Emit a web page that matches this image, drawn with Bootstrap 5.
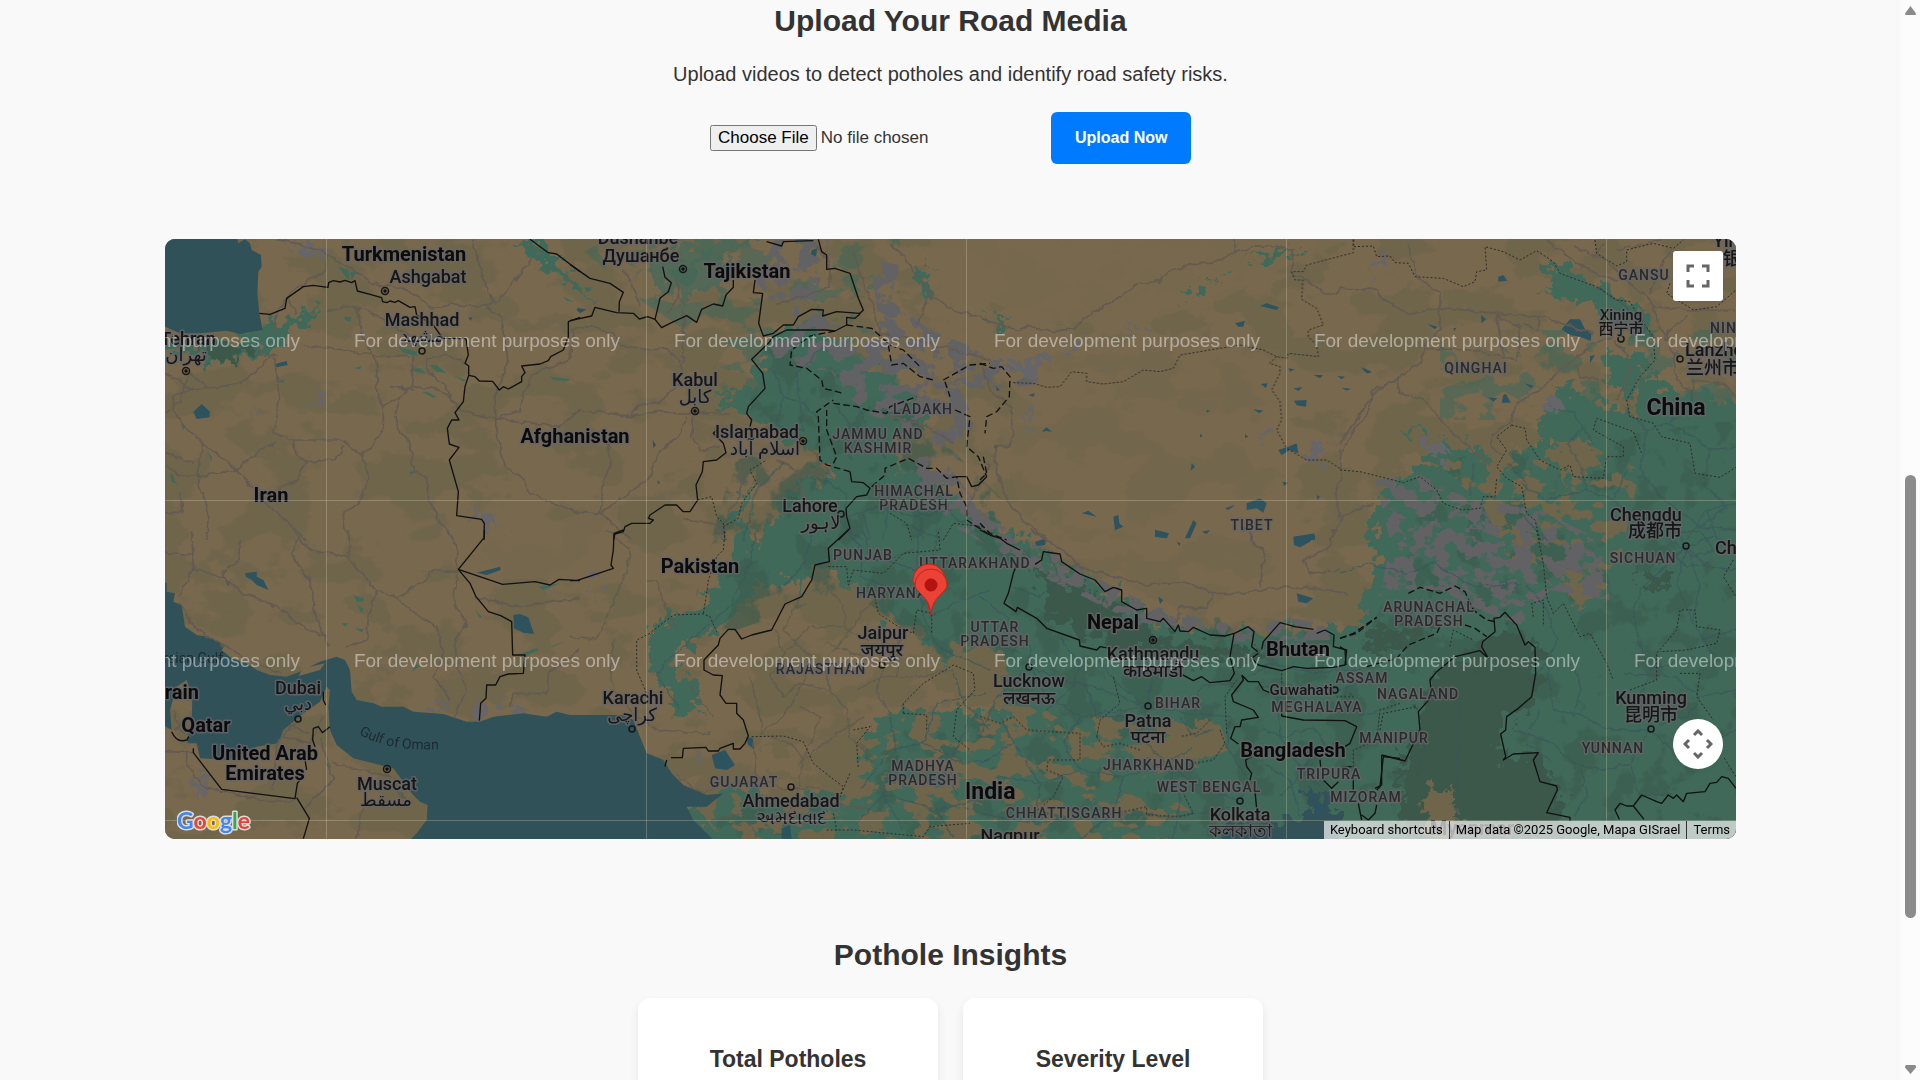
<!DOCTYPE html>
<html lang="en">
<head>
<meta charset="utf-8">
<meta name="viewport" content="width=device-width, initial-scale=1">
<title>Pothole Detection</title>
<link href="https://cdn.jsdelivr.net/npm/bootstrap@5.3.0/dist/css/bootstrap.min.css" rel="stylesheet">
<style>
body{font-family:"Liberation Sans",Arial,sans-serif;color:#333;background:#f9f9f9}
.viewport{height:100vh}
.section-title{font-size:30px;line-height:42px;font-weight:700}
.lead-line{font-size:20px;line-height:28px;margin-top:18px}
.upload-form{margin-top:24px;gap:10px}
.file-pick{width:331px;font-size:17px;line-height:20px}
.btn-upload{background:#007bff;color:#fff;font-weight:700;font-size:16px;line-height:20px;padding:16px 24px;border:0;border-radius:6px;width:140px;white-space:nowrap}
.btn-upload:hover{background:#0069d9;color:#fff}
.map-wrap{margin:75px 165px 0;height:600px;border-radius:10px;background:#78684e}
.map-btn{width:50px;height:50px;background:#fff;right:13px}
.map-full{top:12px;border-radius:3px}
.map-cam{bottom:70px}
.attribution{height:18px;background:rgba(245,245,245,.7);font-family:Roboto,sans-serif;font-size:13px;line-height:18px;right:0;bottom:0}
.attribution > *{color:#000;text-decoration:none;padding:0 6px;border:0;background:none;line-height:18px}
.attribution > * + *{border-left:1px solid #333}
.logo-link{left:12px;bottom:1px;line-height:0}
.insights{margin-top:95px}
.insight-row{margin-top:22px;gap:25px}
.insight-card{width:300px;border:0;border-radius:12px;padding:45px 20px;box-shadow:0 4px 10px rgba(0,0,0,.08)}
.insight-card h3{font-size:23px;line-height:32px;font-weight:700}
.scroll-track{width:19px;background:#fcfcfc}
.scroll-thumb{width:11px;border-radius:6px;background:#8b8b8b;top:44%;height:41%;left:4px}
/* map drawing */
.water{fill:#315159}.lake{fill:#2d535f}.green{fill:#41695a}.dark{fill:#3a594c}.snow{fill:#666569}.land{fill:#78684e}.olive{fill:#6e654b}
.border-line{fill:none;stroke:#111;stroke-width:4;stroke-linejoin:round}
.dispute{fill:none;stroke:#111;stroke-width:4;stroke-dasharray:20 10}
.province{fill:none;stroke:#2b2b28;stroke-width:3;stroke-dasharray:6 6}
.road{fill:none;stroke:#625a51;stroke-width:5;stroke-linejoin:round}
.road-g{fill:none;stroke:#3b555a;stroke-width:4;stroke-opacity:.7}
.road-s{fill:none;stroke:#5d594f;stroke-width:4;stroke-opacity:.8}
.grid-line{fill:none;stroke:#d8d4b8;stroke-opacity:.3;stroke-width:1}
.labels{font-family:Roboto,"Noto Sans","Noto Sans CJK SC","DejaVu Sans",sans-serif;text-anchor:middle;paint-order:stroke;stroke:#666569;stroke-opacity:.8;stroke-width:3px;stroke-linejoin:round}
.country{font-size:20px;font-weight:700;fill:#0c0c0c}
.big{font-size:23px;font-weight:700;fill:#0c0c0c}
.city{font-size:18px;font-weight:500;fill:#161616}
.town{font-size:15px;font-weight:500;fill:#161616}
.state{font-size:14px;font-weight:500;fill:#2b2b2b;letter-spacing:1px}
.sea{font-size:14px;fill:#1c2b31;stroke:none}
.watermark{font-family:"Liberation Sans",Arial,sans-serif;font-size:19px;fill:#fff;fill-opacity:.45;text-anchor:middle}
.st{text-anchor:start}.en{text-anchor:end}
.dot{fill:none;stroke:#161616;stroke-width:1.5}
</style>
</head>
<body>
<div class="viewport d-flex overflow-hidden">
<main class="flex-grow-1 overflow-hidden">
  <section class="text-center">
    <h2 class="section-title m-0">Upload Your Road Media</h2>
    <p class="lead-line mb-0">Upload videos to detect potholes and identify road safety risks.</p>
    <form class="upload-form d-flex justify-content-center align-items-center">
      <input class="file-pick" type="file" id="media" accept="video/*" aria-label="Road video">
      <button class="btn btn-upload" type="submit">Upload Now</button>
    </form>
  </section>

  <section class="map-wrap position-relative overflow-hidden">
    <svg class="d-block w-100 h-100" viewBox="165 239 1571 600" preserveAspectRatio="xMidYMid slice">
      <defs>
        <filter id="rough" x="-5%" y="-5%" width="110%" height="110%"><feTurbulence type="fractalNoise" baseFrequency=".08" numOctaves="4" seed="4"/><feDisplacementMap in="SourceGraphic" scale="38" xChannelSelector="R" yChannelSelector="G"/></filter>
        <filter id="wiggle" x="-5%" y="-5%" width="110%" height="110%"><feTurbulence type="fractalNoise" baseFrequency=".12" numOctaves="2" seed="9"/><feDisplacementMap in="SourceGraphic" scale="6" xChannelSelector="R" yChannelSelector="G"/></filter>
        <filter id="oliveN" x="0" y="0" width="100%" height="100%" color-interpolation-filters="sRGB"><feTurbulence type="fractalNoise" baseFrequency=".016 .024" numOctaves="5" seed="12"/><feColorMatrix values="0 0 0 0 .43 0 0 0 0 .395 0 0 0 0 .295 14 0 0 0 -7.1"/><feComposite in2="SourceGraphic" operator="in"/></filter>
        <filter id="brownN" x="0" y="0" width="100%" height="100%" color-interpolation-filters="sRGB"><feTurbulence type="fractalNoise" baseFrequency=".035 .05" numOctaves="4" seed="31"/><feColorMatrix values="0 0 0 0 .43 0 0 0 0 .395 0 0 0 0 .295 24 0 0 0 -12.4"/><feComposite in2="SourceGraphic" operator="in"/></filter>
        <filter id="greenN" x="0" y="0" width="100%" height="100%" color-interpolation-filters="sRGB"><feTurbulence type="fractalNoise" baseFrequency=".03 .04" numOctaves="4" seed="8"/><feColorMatrix values="0 0 0 0 .255 0 0 0 0 .41 0 0 0 0 .35 24 0 0 0 -13.6"/><feComposite in2="SourceGraphic" operator="in"/></filter>
        <filter id="darkN" x="0" y="0" width="100%" height="100%" color-interpolation-filters="sRGB"><feTurbulence type="fractalNoise" baseFrequency=".03" numOctaves="5" seed="22"/><feColorMatrix values="0 0 0 0 .23 0 0 0 0 .355 0 0 0 0 .3 12 0 0 0 -6.6"/><feComposite in2="SourceGraphic" operator="in"/></filter>
        <filter id="snowN" x="0" y="0" width="100%" height="100%" color-interpolation-filters="sRGB"><feTurbulence type="fractalNoise" baseFrequency=".06 .07" numOctaves="4" seed="5"/><feColorMatrix values="0 0 0 0 .385 0 0 0 0 .385 0 0 0 0 .395 20 0 0 0 -9.6"/><feComposite in2="SourceGraphic" operator="in"/></filter>
        <path id="omanCurve" d="M359,734 Q388,752 440,749"/>
        <g id="cap"><circle r="3.5" class="dot"/><circle r="1.8" fill="#111"/></g>
        <circle id="spot" r="3" class="dot"/>
      </defs>
      <rect class="land" x="165" y="239" width="1571" height="600"/>
      <rect class="land" x="165" y="239" width="1571" height="600" filter="url(#oliveN)"/>
      <path class="land" d="M930,239H1350L1290,265 1220,300 1130,325 1040,320 985,300 940,270Z" opacity=".85"/>
      <path class="land" d="M490,530 560,520 620,500 615,530 575,578 500,580 460,570Z" opacity=".7"/>
      <path class="land" d="M1040,340 1280,350 1280,620 1180,610 1090,570 1020,510 1000,430Z" opacity=".45"/>

      <!-- vegetation -->
      <g filter="url(#rough)">
        <path class="green" d="M765,350 783,325 830,335 900,380 930,420 900,440 890,470 915,462 955,500 1040,548 1107,590 1147,610 1173,627 1233,630 1263,633 1280,623 1330,630 1367,627 1360,597 1373,573 1377,557 1370,530 1377,497 1417,470 1433,453 1407,427 1440,440 1507,457 1547,437 1535,425 1557,390 1593,397 1630,417 1650,377 1673,390 1750,407 1750,860 700,860 690,815 740,785 780,800 860,790 870,730 900,710 1003,712 1010,680 963,670 940,657 927,640 917,627 890,623 880,593 847,587 833,567 817,567 803,597 797,577 757,587 737,610 713,633 680,650 670,670 697,680 703,710 677,717 670,697 650,663 650,628 700,603 718,588 728,555 735,505 755,485 745,520 755,550 775,520 790,487 837,473 817,465 803,443 770,427 750,417 717,400 750,385Z"/>
        <path class="green" d="M650,262 700,239 760,239 720,262 735,280 700,290 685,305 672,290 660,300Z" opacity=".7"/>
        <path class="green" d="M165,340 230,345 265,325 300,315 320,308 300,330 255,355 240,365 210,360 165,345Z"/>
        <path class="green" d="M518,239 540,243 560,270 585,285 595,300 575,290 545,268Z"/>
        <path class="green" d="M925,262 932,290 925,300 918,280ZM985,310 995,322 1012,320 1000,330 988,322ZM1180,295 1200,283 1205,292 1190,300ZM1215,280 1235,266 1225,278ZM1240,262 1275,250 1300,247 1285,258ZM1545,260 1600,285 1640,310 1655,330 1640,345 1610,320 1560,290Z"/>
        <path class="green" d="M1540,290 1580,285 1600,310 1570,300ZM1600,350 1645,355 1650,375 1625,400 1610,380ZM1555,385 1590,390 1580,402Z"/>
      </g>
      <path class="green" d="M765,350 830,335 900,400 1107,600 1367,640 1440,460 1736,420V839H720L700,815 860,790 870,730 1003,712 960,670 850,590 680,650Z" filter="url(#darkN)" opacity=".6"/>
      <path class="dark" filter="url(#rough)" d="M1483,640 1520,630 1540,650 1537,697 1507,717 1500,760 1537,755 1557,787 1570,839H1400V770L1430,680ZM1035,570 1090,590 1170,640 1260,650 1250,665 1120,650 1050,620ZM1370,630 1440,620 1400,650 1360,650ZM1640,570 1670,575 1660,590 1640,585Z"/>
      <path class="dark" filter="url(#rough)" d="M195,343 255,345 240,365 215,358Z"/>
      <path class="land" d="M720,735 870,720 1000,705 1160,715 1220,725 1230,750 1140,780 1190,810 1180,839H720L700,810 780,760Z" filter="url(#brownN)"/>
      <path class="land" d="M1560,430 1640,470 1620,560 1600,600 1540,560 1500,540 1480,500 1400,440Z" filter="url(#brownN)"/>
      <path class="olive" filter="url(#rough)" d="M1545,445 1590,450 1590,475 1560,480ZM1515,520 1530,530 1535,570 1515,565ZM1565,575 1590,580 1585,605 1570,600ZM1420,800 1450,785 1460,820 1455,839H1430ZM963,645 1000,650 1010,690 990,705 950,700 920,670ZM1150,735 1210,725 1220,745 1180,765 1130,750Z"/>
      <path class="green" d="M570,239H900L900,440 740,430 700,340 640,300ZM1440,330H1736V420H1440Z" filter="url(#greenN)" opacity=".55"/>

      <!-- snow and rock -->
      <path class="snow" filter="url(#snowN)" d="M755,280 775,240H830L815,300 830,325 880,330 870,260 900,265 890,300 930,330 1000,358 1040,385 960,390 975,420 960,460 930,440 860,410 830,370 780,370 770,345 800,320 770,300Z"/>
      <path class="snow" filter="url(#snowN)" d="M890,460 940,455 990,520 1040,545 1110,585 1150,605 1240,628 1290,618 1330,625 1330,640 1240,642 1130,620 1050,580 960,530Z"/>
      <path class="snow" filter="url(#snowN)" d="M1375,480 1420,475 1470,500 1540,510 1600,540 1610,600 1550,590 1520,625 1480,610 1440,590 1380,590 1340,650 1380,600 1390,540Z"/>
      <g class="snow" filter="url(#rough)"><path d="M285,246 305,240 330,250 325,255ZM250,406 256,408 252,418ZM315,392 325,395 320,404ZM1000,362 1055,358 1030,380ZM1060,350 1082,345 1075,355ZM1128,330 1150,325 1145,333ZM1308,445 1325,448 1320,465 1310,460ZM1540,395 1560,400 1560,415 1545,410ZM1415,430 1440,440 1455,460 1430,455ZM425,706 450,703 440,712ZM465,712 480,700 490,715 475,720ZM490,700 510,697 495,708ZM510,708 530,712 515,716ZM695,758 708,757 700,764ZM585,580 600,570 595,590ZM1258,433 1265,435 1260,442ZM1025,410 1033,420 1024,422ZM1380,250 1370,275 1385,270ZM197,775 210,780 198,798ZM470,510 490,515 500,530 480,525Z"/></g>

      <!-- seas -->
      <g transform="translate(160 230) scale(.333333)">
        <path class="water" d="M0,20H230L235,40 255,28 270,40 275,60 303,75 305,110 295,125 292,190 298,250 308,300 240,312 200,302 120,310 60,310 15,290 0,292Z"/>
      </g>
      <g transform="translate(160 530) scale(.333333)">
        <path class="water" d="M0,150 20,160 20,185 45,190 40,215 65,225 75,290 110,315 145,320 195,345 185,360 215,385 260,400 290,420 330,435 380,440 420,425 480,395 530,380 555,390 570,420 575,485 590,510 640,520 665,530 730,530 760,545 850,552 920,575 960,575 1000,560 1090,550 1160,560 1190,545 1230,555H1390L1420,570 1440,620 1460,670 1510,690 1535,730 1570,765 1640,795 1690,790 1640,830 1580,830 1600,870 1670,940H740L770,910 800,870 803,825 780,815 755,790 700,715 640,700 580,685 530,645 510,600 505,530 510,480 500,470 480,515 430,550 370,600 355,640 290,650 260,665 210,690 120,685 110,640 85,640 80,630 95,580 97,500 80,450 50,470 30,540 35,600 0,580Z"/>
        <path class="land" d="M415,438 430,415 495,400 480,420Z"/>
        <path class="lake" d="M1060,255 1080,252 1105,262 1122,312 1090,308 1062,295ZM255,130 290,125 290,140 310,150 325,180 290,165 275,150 258,140ZM195,150 210,155 205,168ZM950,128 1020,110 1022,120 980,135Z"/>
      </g>
      <g transform="translate(570 530) scale(.333333)"><path class="lake" d="M425,675 465,660 495,705 470,720 435,715ZM528,620 548,625 553,658 535,645ZM635,895 660,885 665,926H635Z"/></g>
      <path class="water" filter="url(#rough)" d="M1207,850 1233,823 1273,820 1293,823 1313,810 1303,785 1330,803 1340,820 1347,850Z"/>

      <!-- lakes -->
      <g class="lake">
        <g transform="translate(160 230) scale(.333333)"><path d="M100,545 125,522 150,545 148,562 110,567ZM345,402 380,393 383,405 350,412ZM925,263 938,262 932,272ZM1255,230 1260,250 1250,240Z"/></g>
        <g transform="translate(570 230) scale(.333333)"><path d="M725,60 742,55 738,80 722,72ZM25,235 50,238 30,250ZM248,630 258,645 250,655ZM262,750 270,758 264,762Z"/></g>
        <g transform="translate(980 230) scale(.333333)"><path d="M840,228 860,220 897,232 890,240ZM765,280 795,272 790,290 775,290ZM145,495 165,490 160,500ZM185,605 200,592 215,605 200,603ZM842,462 862,460 858,474ZM940,475 968,472 955,483ZM942,512 980,510 978,530 950,526ZM1000,435 1030,435 1020,445ZM925,415 945,418 930,425ZM1072,438 1095,440 1085,448ZM1145,412 1175,425 1165,430ZM820,538 850,542 838,550ZM305,850 325,842 350,860ZM400,860 415,855 418,880 430,890 405,900ZM640,870 650,880 630,925 615,925ZM800,820 840,805 860,820 850,848 830,835 800,840ZM525,900 567,910 560,925 530,920ZM895,660 925,650 950,640 955,670 930,660 905,675ZM680,540 690,543 680,548ZM635,700 645,710 632,722ZM660,612 668,618 660,622ZM795,612 805,620 795,625ZM665,905 690,900 680,912ZM735,835 765,825 745,840ZM945,920 1005,915V930H945ZM1010,795 1020,800 1012,810ZM1085,473 1112,476 1100,482ZM908,755 925,758 912,768ZM48,470 60,480 50,482ZM42,645 55,650 45,656ZM780,890 800,893 790,905Z"/></g>
        <g transform="translate(1340 230) scale(.333333)"><path d="M665,298 690,268 720,268 735,298 755,305 752,333 720,320 690,315ZM475,140 490,135 502,152 475,155ZM423,255 438,268 425,280ZM262,282 292,290 285,298ZM445,502 472,505 460,515ZM490,495 498,492 512,518 485,518ZM62,412 95,428 80,430ZM750,378 765,375 750,400ZM340,295 350,293 342,303ZM555,460 580,468 572,474Z"/></g>
        <g transform="translate(980 530) scale(.333333)"><path d="M940,20 1005,10 990,35 960,52 942,45ZM525,0 565,10 560,25 525,20ZM165,35 200,25 195,45 170,48ZM535,200 550,210 540,222ZM950,190 1000,205 980,220 955,215ZM980,790 1010,820 1000,850 1040,840 990,780ZM590,35 602,40 598,48Z"/></g>
      </g>

      <!-- small green patches of the west -->
      <g class="green"><g transform="translate(160 230) scale(.333333)"><path d="M550,260 575,262 570,275 555,270ZM535,110 565,120 570,150 560,145ZM570,125 588,128 575,150ZM715,350 770,365 770,378 730,368ZM808,405 830,405 860,430 830,425ZM755,415 780,415 798,430 765,425ZM885,437 918,450 910,455ZM785,485 800,485 830,500 820,503ZM583,415 605,408 600,418ZM745,725 765,725 755,735ZM30,733 40,735 45,755 58,765 35,755ZM142,665 155,680 155,695ZM1170,440 1228,447 1225,453 1180,450ZM352,455 375,448 370,458ZM62,580 78,590 70,600ZM1210,200 1242,215 1220,212Z"/></g>
      <g transform="translate(160 530) scale(.333333)"><path d="M580,195 612,205 610,215 590,215ZM590,225 610,235 605,248ZM545,280 565,280 555,290ZM585,295 612,298 605,307ZM945,240 965,260 960,265ZM1085,370 1130,355 1135,360 1095,380ZM1135,170 1200,160 1150,180ZM495,690 510,712 500,708ZM755,425 770,402 780,408ZM1170,350 1220,332 1180,350ZM720,785 732,790 725,805Z"/></g></g>

      <!-- roads -->
      <g class="road" filter="url(#wiggle)">
        <g transform="translate(160 230) scale(.333333)"><path d="M350,28 430,45 500,70 640,160 740,180 820,235 870,225 950,228 1010,220 1120,80M935,28 965,130 1000,220M980,230 1025,260 1042,380 1030,440 1005,500 1008,600 1035,710 1095,750 1105,790 1260,850M505,75 495,125 430,160 390,190 350,250 345,310M500,245 560,230 620,240 700,290 760,320M430,345 550,360 640,375 750,380M590,240 610,320 650,400 652,480 670,540 670,600 640,640 605,680 630,740 605,800 590,825 550,850 555,900 570,930M340,370 290,420 240,460 150,475 90,480 40,500 40,540 75,590 130,640 230,720 330,830 440,930M340,380 355,450 355,560 340,610 400,630 550,630 610,680M230,720 300,660 350,635M400,630 405,670 440,695 520,690 555,650M440,695 410,750 350,780M105,740 230,720M130,640 110,740 145,850 140,930M15,430 100,480M15,550 60,510 90,430 150,475M760,380 755,470 720,500 705,560 720,610 745,630 760,720 800,745 805,800 830,860 880,930M760,470 820,475 870,500 890,530 940,555 1080,575 1200,590 1260,540M690,470 760,480M800,380 800,420 850,460 880,520M670,530 720,500M15,700 60,740 120,735M15,850 70,850 60,790M15,670 100,700M1010,565 1080,540 1090,490 1120,430 1180,410 1230,390 1240,300M380,200 410,250M350,375 290,375M800,385 860,375 920,400"/></g>
        <g transform="translate(570 230) scale(.333333)"><path d="M0,300 60,290 130,310 150,345 240,360 290,355 330,390 340,440M0,550 90,545 180,560 260,545 370,550 480,555M180,560 200,530 270,515 340,450M350,560 330,610 260,680 240,740 160,800 90,850 0,840M370,560 365,620 390,660 450,650M110,640 125,690 100,760 90,850 180,930M620,690 680,720 700,800 720,900M740,50 780,100 780,170 700,200 620,220M850,60 880,160 910,230 930,310 1040,330 1150,360 1260,390M960,40 1000,80 1080,190 1060,240 1040,280M1080,195 1150,240 1260,270M160,120 190,170 210,230M320,150 330,200 290,250M340,240 340,400M720,650 790,750M960,560 1050,580 1150,640M340,870 430,880 470,930M510,700 510,800 470,850M1260,700 1190,840"/></g>
        <g transform="translate(980 230) scale(.333333)"><path d="M0,265 110,300 140,288 220,305 290,295 310,265 420,200 480,160 540,155 560,130 640,100 700,100 760,70 830,48 900,50 940,65 935,130 980,150 1030,190 1070,195 1080,175 1190,178 1205,205 1260,240M765,28 765,68M0,400 30,480 95,530 100,600 90,650 45,650 50,720 75,800 130,870 200,930M1260,445 1180,480 1165,550 1120,600 1080,670 1085,730 1065,800 1080,860 1180,820M1090,860 1050,930M810,905 815,930"/></g>
        <g transform="translate(1340 230) scale(.333333)"><path d="M170,445 240,400 260,340 300,300 300,190 230,140 205,40M100,490 170,445M0,640 30,600 100,490M130,210 200,250 330,235 470,250 600,260 760,310M260,355 390,360 530,390 540,290 470,255 490,380M170,445 180,490 250,510 330,600 450,710M600,260 595,300 550,280M820,320 760,340 640,440 600,480 530,520 510,580 460,610 450,650 490,680M620,30 700,90 780,140 830,150M700,50 800,90 870,160 930,210 960,290 1000,370 1010,450 1100,530M930,190 950,130 990,60M800,30 760,80M940,230 1050,240 1188,240M1040,260 980,310 990,350M820,330 860,370 870,430 830,510M710,400 720,440 780,445M830,60 960,30M1060,450 1150,460 1188,500"/></g>
        <g transform="translate(160 530) scale(.333333)"><path d="M400,0 415,20 395,75 450,150 465,250 505,350M415,20 450,60 560,80 650,180 710,205 780,260 830,290 850,370M565,0 570,80M710,205 800,150 815,120 890,130M650,180 625,260 620,330 560,355M95,0 100,110 55,200M15,65 95,75M100,115 190,145 240,185 340,225 440,295 500,320M240,30 235,90 190,130 190,145M60,215 100,290 190,345 250,380 360,430M860,0 890,50 890,150 880,220 920,280 885,330 890,400M940,200 1080,230 1260,205M850,370 820,440 870,510M890,400 920,480 880,560M1060,490 1050,530M1060,490 1160,490 1165,430 1260,360M15,665 100,668M80,670 80,700 130,770 320,815 400,815M340,780 350,640 420,560M480,630 520,750 430,840M520,700 600,720 690,740M700,740 720,800 760,820M610,830 590,926M370,620 450,640 490,560M390,590 450,610M40,540 60,600 90,620M40,600 90,560"/></g>
        <g transform="translate(980 530) scale(.333333)"><path d="M150,0 250,60 300,110 400,140 500,165 610,155 700,190 780,190 920,170 1010,175 1100,190M700,190 680,235 600,230 590,280M840,170 855,70 810,30V0M1060,0 1050,50 970,90 990,130 1080,120"/></g>
      </g>
      <g class="road-s" filter="url(#wiggle)">
        <g transform="translate(570 530) scale(.333333)"><path d="M110,0 180,60 175,110 80,330 0,320M230,150 260,150 290,240 320,300M130,330 120,420 130,480 200,560 260,600 420,610M540,440 560,520 580,610M620,300 640,370 600,440 640,500 690,460 780,480 830,540M690,200 640,300 720,380 700,460M740,130 820,230 830,300 900,330M830,290 720,290 640,370M700,460 640,560 570,610M780,480 760,400 850,290 900,220M690,530 750,560 720,640 690,700M860,480 940,440 1050,440 1150,420M940,410 920,480 960,560M600,620 660,640 700,690 680,800 640,880M320,740 400,790 450,760M430,870 520,850 560,920M700,690 790,620 880,560M830,540 840,620 900,680M770,340 880,380 930,410M830,60 760,110M990,300 980,440M550,640 560,740 640,780 740,770 800,820 900,840M870,640 920,700M360,470 430,560"/></g>
      </g>
      <g class="road-g" filter="url(#wiggle)">
        <g transform="translate(570 530) scale(.333333)"><path d="M560,0 540,100 480,230 300,380 260,430 330,540M730,0 700,100 640,170M1050,0 1040,90 1060,260 1100,350 1260,420M880,0 900,80 1040,120M830,0 880,60 870,140 950,170M1100,0 1090,100M1080,260 1180,210 1260,180M1030,60 940,90 860,80M870,780 960,660 1060,640 1180,700 1260,690M960,560 980,680 940,790 1000,900M1060,640 1100,520 1250,490M1150,420 1180,520 1260,600M940,790 1100,840 1260,800M1100,840 1150,926M1200,560 1140,700 1160,800M860,880 940,790"/></g>
        <g transform="translate(570 230) scale(.333333)"><path d="M610,420 640,500 620,590 700,600M640,500 700,520 740,560M700,600 680,430 760,350M800,530 850,600 840,690M860,520 900,620 950,690M830,860 930,830 1030,860 1150,840M820,890 880,930M960,800 940,930M1040,800 1060,930M880,850 900,930M740,740 830,790 820,870M650,800 800,830M520,930 560,780 640,700M1000,880 1120,930M1100,790 1160,870 1250,900"/></g>
        <g transform="translate(980 530) scale(.333333)"><path d="M0,200 80,260 150,350 150,410 240,450 340,470 500,530 640,550 750,560M0,320 120,370M150,410 50,500 0,620M150,410 200,500 300,560 500,530M240,320 300,400 280,470 200,540M350,380 400,450 500,530M500,530 520,420 600,440M500,530 480,620 560,700 640,760 770,810M640,550 660,470 760,460M750,560 740,650 800,740 780,820M640,650 560,700 430,740 300,720 180,760 50,740M430,740 400,850 300,926M560,700 600,800 580,926M300,560 250,640 300,720M100,640 180,760 160,880M0,850 160,880 400,850 580,860 770,830M200,60 240,150 180,200 100,170M850,600 920,620 1000,590M890,480 900,620 950,700 1020,770M830,470 960,470 1080,480 1200,430M1000,590 1040,650 960,720M850,700 930,750 960,860M900,800 1000,700M790,450 870,400 1000,430 1200,410M1100,480 1090,560M1140,560 1240,530M320,470 350,560 480,560M60,560 100,640 0,700M700,600 640,620 600,560"/></g>
        <g transform="translate(1340 530) scale(.333333)"><path d="M0,130 80,100 200,130 280,100 400,170 540,160M560,160 620,240 650,330 620,400 640,540 740,560 800,600 930,600M930,600 1000,660 1100,650 1188,600M930,600 900,500 930,420 900,340 880,250 900,180 1040,50M1040,50 980,100 920,100M1040,50 1100,110 1188,120M1040,50 1000,0M1040,50 1120,20 1188,40M1040,50 1080,160 1060,280 1120,380 1188,400M1040,50 1010,160 1060,280M930,600 870,700 790,720 700,700 640,640 520,600M870,700 900,800 1000,790M700,380 720,480 700,560M850,430 1000,440 1080,500 1040,560 960,580M1080,500 1188,480M620,400 560,460M360,500 350,860M230,740 260,640 200,620M420,440 400,420M600,540 570,600M1080,330 1188,300M720,700 740,800 700,860M930,420 1060,380M980,20 1060,80 1120,60 1080,0 1000,10M990,60 1040,110 1110,100M560,640 640,700"/></g>
        <g transform="translate(1340 230) scale(.333333)"><path d="M770,170 860,230 940,320M860,540 920,600 980,580 1060,620 1110,660 1188,650M1060,450 1050,540 980,580M500,700 560,760 540,850 620,930M540,760 620,810 740,780 820,810 900,880M740,780 720,700 680,640 740,590M920,600 900,720 960,800M1110,660 1090,760 1160,830 1080,890M1040,930 1100,840 1188,820M1100,840 1130,930M390,800 400,700M650,540 700,550 760,640M960,800 1080,890 1188,900M820,810 860,720"/></g>
      </g>

      <!-- provincial boundaries -->
      <g class="province">
        <g transform="translate(980 230) scale(.333333)"><path d="M1120,30 1120,68 980,105 970,125 935,125 945,150 968,150 965,208 1010,235 1030,285 985,300 985,320 1010,345 1015,380 925,370 920,385 890,380 850,360 780,345 690,360 600,375 580,415 540,425 490,420 430,455 370,462 320,455 320,430 275,425 240,470 200,472 160,460 100,458M890,380 868,400 900,410 900,430 875,480 900,515 905,570 890,600 920,655 980,690 1040,690 1080,715"/></g>
        <g transform="translate(1340 230) scale(.333333)"><path d="M40,28 40,50 100,48 110,80 150,78 165,98 205,100 225,140 310,145 370,170 405,155 410,125 440,120 435,50 490,65 540,90 590,62 640,95 660,130 700,145 770,170 830,210 870,215 890,250 940,320 945,390 900,440 860,510 870,560 940,580 965,620 1050,640 1065,730 1140,742 1188,712M0,720 60,725 120,740 190,758 240,740 290,780 310,820 365,840 420,835 430,800 465,800 470,745M515,585 555,595 560,630 600,690 660,720 690,705 700,740 790,745 800,680 850,680 850,650 760,600 770,565 880,605 905,670M515,585 470,620 500,660 470,710 500,745 545,770 560,850 585,870 600,930M765,30 770,70 830,108 860,95 860,60 940,40 1000,55 1030,30M990,160 980,190 1060,240 1130,230 1188,180"/></g>
        <g transform="translate(980 530) scale(.333333)"><path d="M350,620 360,570 420,520 400,440M0,560 60,580 100,560 140,600 300,610 300,690 205,690 200,720 250,740 220,800 150,860M350,620 370,650 420,640 480,660M740,610 735,500 770,450M720,600 735,640 700,690 640,700M690,570 650,610 600,620M410,850 500,830 500,855 600,860 640,850 610,790M1110,490 1120,500 1070,500M905,430V470M1260,520 1200,540 1190,630 1120,660 1120,780"/></g>
        <g transform="translate(570 530) scale(.333333)"><path d="M400,250 410,190 415,150 440,80 460,60 465,0M245,305 310,255 400,252 420,260 440,305M240,310 200,330 200,420 230,490M545,620 640,618 700,635 730,700 780,740 820,770 810,800 840,730M850,600 900,590 860,640 865,715M1000,550 1000,520 1060,460 1150,405 1210,430 1215,480 1160,540 1150,620 1200,660M1000,550 1070,555 1070,600M775,110 830,110 835,165 850,120 940,130 1000,70 1110,60 1105,0M915,205 925,250 985,290 1030,310 1040,240 1085,250 1085,310M770,900 850,900 1060,920 1080,890 1200,880M790,850 800,900"/></g>
        <g transform="translate(570 230) scale(.333333)"><path d="M383,810 425,800 440,860 460,880 465,930M460,890 505,865 515,820 560,760 540,720 590,690M960,850 1010,880 1025,930M1120,930 1150,880 1240,890"/></g>
        <g transform="translate(1340 530) scale(.333333)"><path d="M590,0 610,100 620,200 640,250 670,220 720,320 750,310 800,400 820,450M580,260 575,220 610,210 610,290M870,480 950,450 950,370 1010,300 1020,240 1065,240 1070,290 1140,300 1130,340 1040,360 960,365M1020,430 1080,430 1070,500 1120,570M1180,90 1150,140 1188,200M330,350 340,300 400,330M120,600 130,550 230,530M1188,740 1150,680"/></g>
      </g>

      <!-- borders -->
      <g class="border-line">
        <g transform="translate(160 230) scale(.333333)"><path d="M298,250 330,253 375,235 380,205 430,170 460,166 504,172 506,158 520,152 540,156 555,151 575,158 585,152 592,183 630,193 665,203 668,215 680,218 690,213 705,217 715,212 750,232 765,230 770,255 820,285 848,325 918,326 925,375 915,400 926,408 926,436 945,440 958,453 998,454 1018,480 1030,470 1045,477 1085,455 1085,440 1095,428 1085,408 1140,402 1165,392 1172,380 1210,360 1225,320 1225,275 1260,262M926,436 915,470 910,515 885,548 897,570 875,570 862,595 868,642 897,652 868,690 895,785 890,857 965,868 973,880 972,930M1110,28 1165,68 1190,72 1260,125"/></g>
        <g transform="translate(570 230) scale(.333333)"><path d="M0,272 65,258 75,232 140,248 190,250 208,267 233,260 255,268 275,293 300,280 350,257 380,277 395,238 430,222 458,228 468,195 490,172 490,150M0,103 60,145 120,160 160,187 148,215 147,245M278,110 285,142 304,158 295,185 270,205 255,268M555,150 550,188 578,190 566,280 580,318 610,310 640,285 670,285 685,260 725,238 760,240 758,258 800,245 870,250 880,240 865,205 850,160 840,130 795,115 770,118 770,75 755,65 745,28M870,252 855,265 830,262 830,285 795,303 770,300 650,300 610,320 595,340 545,388 578,430 585,475 535,530 530,550 545,570 540,590M440,600 430,610 460,640 468,668 440,690 400,695 397,725 378,765 383,810 360,845 340,845 320,825 285,825 240,855 235,865 250,870 240,880 185,880 165,890 160,905 135,912 130,930M590,35 635,48 640,35 730,32M805,930 840,895 830,860 828,835 860,800 890,795 900,775 880,758 845,755 840,725M1160,740 1190,740 1205,770 1225,765 1250,740"/></g>
        <g transform="translate(570 530) scale(.333333)"><path d="M160,0 132,10 130,60 123,105 130,115 20,152 0,152M835,0 775,55 778,95 735,105 725,150 695,200 645,222 605,300 545,315 515,327 495,298 475,298 450,325 445,345 402,390 402,420 430,435 457,437 450,495 468,520 500,520 500,550 520,570 535,618 525,640 510,657 490,657 490,640 450,655 445,663 415,663 408,652 340,655 337,683 303,683M290,690 285,710"/></g>
        <g transform="translate(160 530) scale(.333333)"><path d="M973,0 973,22 895,118 1028,163 1125,155 1170,165 1197,148 1260,152M895,118 930,160 948,200 985,245 1022,257 1055,275 1058,375 1095,375 1090,430 1045,432 1020,440 1007,465 980,465 978,505 962,520 958,572M100,655 100,668 185,778 405,806 412,760 420,750M435,690 440,720M410,803 448,865 430,926M35,605 Q50,640 80,630L87,620M490,485 490,510 497,525M510,590 487,608 475,590 460,595 458,630 465,650"/></g>
        <g transform="translate(980 530) scale(.333333)"><path d="M112,100 100,130 85,190 72,220 108,245 112,232 170,265 200,295 298,330 300,348 350,360 360,350 390,355M600,430 640,452 665,440 690,458 750,452 763,430 750,380 762,310 735,318 690,315 640,292 625,305 600,303 595,285 585,305 550,265 540,275 500,265 500,235 470,240 425,215 425,180 400,172 375,185 345,150 300,132 245,95 240,72 190,65 185,90 165,103M120,60 80,40 60,25 30,15 0,0M763,310 805,290 822,305 815,350 833,365M845,358 850,335 900,278 945,290 1000,298M1010,310 1035,300 1062,315 1060,350 1100,360 1095,405 1060,412 980,415 940,410 905,422 835,405 815,385 835,370M785,435 805,455 835,455 850,480 875,490M905,550 905,558 970,570 1095,572 1130,590 1110,640 1095,650M785,435 790,450 755,495 760,515 820,540 835,562 785,570 780,590 765,590 752,625 775,642M815,680 797,690 800,710 815,730 810,750M825,785 830,835M1020,690 1022,710M1030,750 1055,775 1075,755M1085,712 1115,710M1120,740V780M1135,820 1145,870M1260,685 1210,680 1200,770 1190,780M1190,825 1185,850 1165,870 1145,855"/></g>
        <g transform="translate(1340 530) scale(.333333)"><path d="M125,675 195,693 240,600 235,545 275,500 270,450 290,425 345,380 420,362 445,385 425,350 428,335 465,305 462,265 480,262 495,247 530,285 555,345 565,335 585,352 587,430 575,500 535,535 500,560 497,600 482,612 497,680 490,690 520,672 595,668 580,690 600,755 650,768 652,780 620,848 690,862 690,875M125,675 125,765 105,775M912,868 880,828 860,828 840,820 825,840 838,868M880,828 905,795 950,815 965,820 985,795 1000,805 1010,795 1030,815 1040,790 1095,785 1110,760 1130,757 1145,740 1165,745 1188,775M0,350 15,360 18,405"/></g>
      </g>
      <g class="dispute">
        <g transform="translate(570 230) scale(.333333)"><path d="M830,285 905,295 960,345 1000,360 1050,410M840,725 770,705 750,690 745,560 740,545 790,510M795,303 720,318 665,360 660,405 710,415 755,450 760,475 820,490M790,520 860,530 890,540 950,550 960,530 1040,500M790,700 800,680 770,600 770,540M1155,540 1200,560 1190,650 1225,680 1250,740M905,770 945,735 945,715 1015,685 1070,715 1100,715 1130,745 1160,740 1170,790 1190,830 1190,870 1260,915M1120,450 1200,405 1260,400M955,345 965,405 1000,400 1050,440 1090,450M1125,455 1140,500"/></g>
        <g transform="translate(980 230) scale(.333333)"><path d="M0,400 40,415 65,410 90,440 88,500 50,545 20,560 15,610M10,680 20,730 0,750M0,880 30,910 80,930"/></g>
        <g transform="translate(980 530) scale(.333333)"><path d="M1080,325 1130,310 1190,262"/></g>
        <g transform="translate(1340 530) scale(.333333)"><path d="M0,325 40,310 110,262M205,190 240,172 300,190 345,168 375,185 400,240 440,270 465,275M80,410 170,385 205,345 290,310 300,290M375,285 405,295 440,320"/></g>
      </g>

      <!-- place markers -->
      <use href="#cap" x="385" y="291"/><use href="#cap" x="186" y="371"/><use href="#cap" x="683" y="269"/><use href="#cap" x="695" y="411"/><use href="#cap" x="803" y="441"/><use href="#cap" x="1153" y="640"/><use href="#cap" x="387" y="769"/>
      <use href="#spot" x="422" y="351"/><use href="#spot" x="841" y="514"/><use href="#spot" x="1621" y="339"/><use href="#spot" x="1680" y="359"/><use href="#spot" x="1686" y="546"/><use href="#spot" x="1651" y="729"/><use href="#spot" x="298" y="719"/><use href="#spot" x="632" y="729"/><use href="#spot" x="791" y="787"/><use href="#spot" x="882" y="665"/><use href="#spot" x="1029" y="667"/><use href="#spot" x="1148" y="706"/><use href="#spot" x="1335" y="690"/><use href="#spot" x="1240" y="801"/>

      <g class="labels">
        <g class="country">
          <text x="404" y="261">Turkmenistan</text><text x="747" y="278">Tajikistan</text><text x="271" y="502">Iran</text><text x="575" y="443">Afghanistan</text><text x="700" y="573">Pakistan</text><text x="206" y="732">Qatar</text><text class="en" x="199" y="699">Bahrain</text><text x="265" y="760">United Arab</text><text x="265" y="780">Emirates</text><text x="1113" y="629">Nepal</text><text x="1298" y="656">Bhutan</text><text x="1293" y="757">Bangladesh</text><text x="1472" y="835">Myanmar</text>
        </g>
        <g class="big"><text x="1676" y="415">China</text><text x="990" y="799">India</text></g>
        <g class="city">
          <text x="428" y="283">Ashgabat</text><text x="422" y="326">Mashhad</text><text x="422" y="342">مشهد</text><text x="188" y="345">Tehran</text><text x="186" y="361">تهران</text><text x="638" y="244">Dushanbe</text><text x="641" y="262">Душанбе</text><text x="695" y="386">Kabul</text><text x="695" y="403">كابل</text><text x="757" y="438">Islamabad</text><text x="765" y="455">اسلام آباد</text><text x="810" y="512">Lahore</text><text x="821" y="529">لاہور</text><text x="883" y="639">Jaipur</text><text x="882" y="656">जयपुर</text><text x="633" y="704">Karachi</text><text x="632" y="721">کراچی</text><text x="791" y="807">Ahmedabad</text><text x="791" y="824">અમદાવાદ</text><text x="1029" y="687">Lucknow</text><text x="1029" y="704">लखनऊ</text><text x="1153" y="660">Kathmandu</text><text x="1153" y="677">काठमाडौं</text><text x="1148" y="727">Patna</text><text x="1148" y="743">पटना</text><text x="1240" y="821">Kolkata</text><text x="1240" y="837">কলকাতা</text><text x="1010" y="842">Nagpur</text><text x="298" y="694">Dubai</text><text x="298" y="710">دبي</text><text x="387" y="790">Muscat</text><text x="386" y="806">مسقط</text><text x="1646" y="521">Chengdu</text><text x="1655" y="537">成都市</text><text x="1651" y="704">Kunming</text><text x="1651" y="721">昆明市</text><text class="st" x="1685" y="356">Lanzhou</text><text class="st" x="1686" y="374">兰州市</text><text class="st" x="1713" y="247">Yinchuan</text><text class="st" x="1723" y="265">银川市</text><text class="st" x="1715" y="554">Chongqing</text>
        </g>
        <g class="town"><text x="1621" y="320">Xining</text><text x="1621" y="334">西宁市</text><text x="1301" y="695">Guwahati</text></g>
        <g class="state">
          <text x="923" y="414">LADAKH</text><text x="878" y="439">JAMMU AND</text><text x="878" y="453">KASHMIR</text><text x="914" y="496">HIMACHAL</text><text x="914" y="510">PRADESH</text><text x="1252" y="530">TIBET</text><text x="1644" y="280">GANSU</text><text x="1476" y="373">QINGHAI</text><text class="st" x="1710" y="333">NINGXIA</text><text x="1643" y="563">SICHUAN</text><text x="863" y="560">PUNJAB</text><text x="975" y="568">UTTARAKHAND</text><text class="st" x="856" y="598">HARYANA</text><text x="821" y="674">RAJASTHAN</text><text x="744" y="787">GUJARAT</text><text x="923" y="771">MADHYA</text><text x="923" y="785">PRADESH</text><text x="995" y="632">UTTAR</text><text x="995" y="646">PRADESH</text><text x="1178" y="708">BIHAR</text><text x="1362" y="683">ASSAM</text><text x="1317" y="712">MEGHALAYA</text><text x="1418" y="699">NAGALAND</text><text x="1429" y="612">ARUNACHAL</text><text x="1429" y="626">PRADESH</text><text x="1394" y="743">MANIPUR</text><text x="1329" y="779">TRIPURA</text><text x="1209" y="792">WEST BENGAL</text><text x="1366" y="802">MIZORAM</text><text x="1149" y="770">JHARKHAND</text><text x="1064" y="818">CHHATTISGARH</text><text x="1613" y="753">YUNNAN</text>
        </g>
        <g class="sea"><text class="en" x="223" y="663">Persian Gulf</text><text class="st"><textPath href="#omanCurve">Gulf of Oman</textPath></text></g>
      </g>

      <path class="grid-line" d="M326.5,239V839M646.5,239V839M966.5,239V839M1286.5,239V839M1606.5,239V839M165,500.5H1736M165,820.5H1736"/>
      <g class="watermark">
        <text x="167" y="347">For development purposes only</text><text x="487" y="347">For development purposes only</text><text x="807" y="347">For development purposes only</text><text x="1127" y="347">For development purposes only</text><text x="1447" y="347">For development purposes only</text><text x="1767" y="347">For development purposes only</text>
        <text x="167" y="667">For development purposes only</text><text x="487" y="667">For development purposes only</text><text x="807" y="667">For development purposes only</text><text x="1127" y="667">For development purposes only</text><text x="1447" y="667">For development purposes only</text><text x="1767" y="667">For development purposes only</text>
      </g>
      <g fill="#ea4335" stroke="#c5221f">
        <path d="M929,609C928,598 923,594 918,588C915,584 913,583 913,580A16,16 0 0 1 945,580C945,583 943,585 940,588C935,594 930,598 929,609Z"/>
        <path d="M931,615C930,603 926,599 920,593C917,590 915,588 915,585A16,16 0 0 1 947,585C947,588 945,590 942,593C936,599 932,603 931,615Z"/>
        <circle cx="931" cy="585" r="6.500" fill="#b31412" stroke="none"/>
      </g>
    </svg>
    <button class="map-btn map-full position-absolute border-0 p-0 shadow-sm" type="button" aria-label="Toggle fullscreen view">
      <svg width="24" height="24" viewBox="0 0 24 24" fill="none" stroke="#666" stroke-width="3"><path d="M2,8V2H8M16,2H22V8M22,16V22H16M8,22H2V16"/></svg>
    </button>
    <button class="map-btn map-cam position-absolute border-0 p-0 rounded-circle shadow-sm" type="button" aria-label="Map camera controls">
      <svg width="30" height="30" viewBox="0 0 30 30" fill="none" stroke="#666" stroke-width="3"><path d="M11,6 15,2 19,6M11,24 15,28 19,24M6,11 2,15 6,19M24,11 28,15 24,19"/></svg>
    </button>
    <a class="logo-link position-absolute" href="#" aria-label="Open this area in Google Maps">
      <svg width="84" height="30" viewBox="0 0 84 30" font-family="Lato,sans-serif" font-size="23" font-weight="700" stroke="#ddd" stroke-width="3" paint-order="stroke" stroke-linejoin="round"><text x="0" y="21"><tspan fill="#4285f4">G</tspan><tspan fill="#ea4335">o</tspan><tspan fill="#fbbc04">o</tspan><tspan fill="#4285f4">g</tspan><tspan fill="#34a853">l</tspan><tspan fill="#ea4335">e</tspan></text></svg>
    </a>
    <div class="attribution position-absolute d-flex text-nowrap">
      <button type="button">Keyboard shortcuts</button><span>Map data ©2025 Google, Mapa GISrael</span><a href="#">Terms</a>
    </div>
  </section>

  <section class="insights text-center">
    <h2 class="section-title m-0">Pothole Insights</h2>
    <div class="insight-row d-flex justify-content-center">
      <div class="card insight-card"><h3 class="m-0">Total Potholes</h3></div>
      <div class="card insight-card"><h3 class="m-0">Severity Level</h3></div>
    </div>
  </section>
</main>
<div class="scroll-track position-relative flex-shrink-0 d-flex flex-column justify-content-between align-items-center" aria-hidden="true">
  <svg width="19" height="18" viewBox="0 0 19 18"><path d="M9.500,6 15,13.500Q15,15 14,15H5Q4,15 4,13.500Z" fill="#8b8b8b"/></svg>
  <div class="scroll-thumb position-absolute"></div>
  <svg width="19" height="18" viewBox="0 0 19 18"><path d="M9.500,12 15,5.500Q15,3 14,3H5Q4,3 4,5.500Z" fill="#8b8b8b"/></svg>
</div>
</div>
<script src="https://cdn.jsdelivr.net/npm/bootstrap@5.3.0/dist/js/bootstrap.bundle.min.js"></script>
</body>
</html>
